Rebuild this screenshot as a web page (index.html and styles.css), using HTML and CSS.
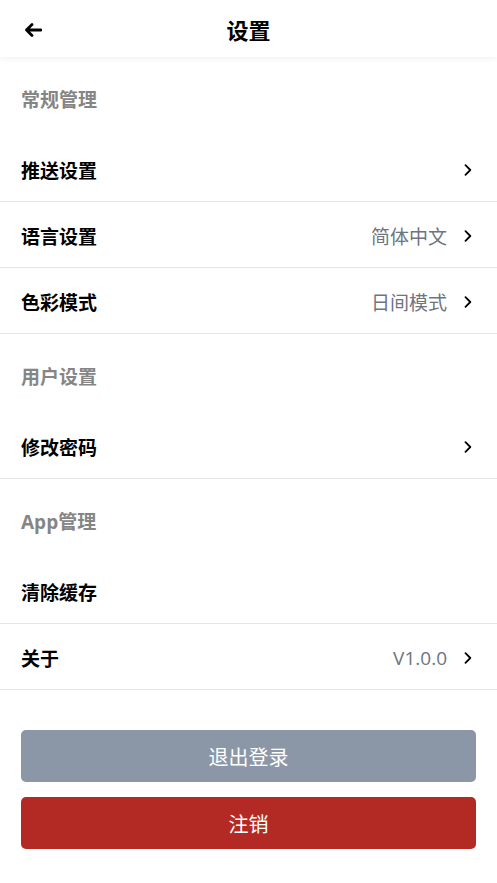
FILE: index.html
```html
<!DOCTYPE html>
<html lang="zh-CN">
<head>
    <meta charset="utf-8"/>
    <title>设置</title>
    <link rel="stylesheet" href="styles.css">
</head>
<body>

    <header class="top-bar">
        <span class="back">
            <svg width="18" height="14" viewBox="0 0 18 14">
                <path d="M17 7H2.5M8 1.5L2.5 7L8 12.5" fill="none" stroke="#000" stroke-width="2.8" stroke-linecap="round" stroke-linejoin="round"/>
            </svg>
        </span>
        <h1 class="page-title">设置</h1>
    </header>

    <main>
        <div class="group-title">常规管理</div>
        <div class="row">
            <span class="label">推送设置</span>
            <span class="chevron"><svg width="8" height="12" viewBox="0 0 8 12"><path d="M1.5 1.2L6.3 6L1.5 10.8" fill="none" stroke="#000" stroke-width="1.8" stroke-linecap="round" stroke-linejoin="round"/></svg></span>
        </div>
        <div class="row">
            <span class="label">语言设置</span>
            <span class="value">简体中文</span>
            <span class="chevron"><svg width="8" height="12" viewBox="0 0 8 12"><path d="M1.5 1.2L6.3 6L1.5 10.8" fill="none" stroke="#000" stroke-width="1.8" stroke-linecap="round" stroke-linejoin="round"/></svg></span>
        </div>
        <div class="row">
            <span class="label">色彩模式</span>
            <span class="value">日间模式</span>
            <span class="chevron"><svg width="8" height="12" viewBox="0 0 8 12"><path d="M1.5 1.2L6.3 6L1.5 10.8" fill="none" stroke="#000" stroke-width="1.8" stroke-linecap="round" stroke-linejoin="round"/></svg></span>
        </div>

        <div class="group-title">用户设置</div>
        <div class="row">
            <span class="label">修改密码</span>
            <span class="chevron"><svg width="8" height="12" viewBox="0 0 8 12"><path d="M1.5 1.2L6.3 6L1.5 10.8" fill="none" stroke="#000" stroke-width="1.8" stroke-linecap="round" stroke-linejoin="round"/></svg></span>
        </div>

        <div class="group-title">App管理</div>
        <div class="row">
            <span class="label">清除缓存</span>
        </div>
        <div class="row">
            <span class="label">关于</span>
            <span class="value">V1.0.0</span>
            <span class="chevron"><svg width="8" height="12" viewBox="0 0 8 12"><path d="M1.5 1.2L6.3 6L1.5 10.8" fill="none" stroke="#000" stroke-width="1.8" stroke-linecap="round" stroke-linejoin="round"/></svg></span>
        </div>

        <div class="actions">
            <button class="btn btn-logout">退出登录</button>
            <button class="btn btn-cancel">注销</button>
        </div>
    </main>

</body>
</html>
```

FILE: styles.css
```css
body {
    margin: 0;
    background: #fff;
    font-family: "Open Sans", "Noto Sans CJK SC", sans-serif;
    color: #000;
}

.top-bar {
    height: 57px;
    display: flex;
    align-items: center;
    justify-content: center;
    position: relative;
    box-shadow: 0 2px 6px rgba(0, 0, 0, 0.06);
}

.back {
    position: absolute;
    left: 24px;
    top: 23px;
    display: flex;
}

.page-title {
    margin: 0;
    font-size: 22px;
    font-weight: 700;
    line-height: 1;
    padding-top: 2px;
}

.group-title {
    height: 79px;
    box-sizing: border-box;
    padding: 4px 21px 0;
    display: flex;
    align-items: center;
    font-size: 19px;
    font-weight: 700;
    color: #858585;
}

.row {
    height: 66px;
    box-sizing: border-box;
    border-bottom: 1px solid #e6e6e9;
    padding: 2px 25px 0 21px;
    display: flex;
    align-items: center;
}

.label {
    flex: 1;
    font-size: 19px;
    font-weight: 700;
}

.value {
    font-size: 19px;
    color: #6e7480;
    margin-right: 17px;
}

.chevron {
    display: flex;
}

.actions {
    padding: 40px 21px 0;
    display: flex;
    flex-direction: column;
    gap: 15px;
}

.btn {
    height: 52px;
    border: none;
    border-radius: 5px;
    font-family: inherit;
    font-size: 20px;
    color: #fff;
}

.btn-logout {
    background: #8b96a7;
}

.btn-cancel {
    background: #b32a25;
}
```
